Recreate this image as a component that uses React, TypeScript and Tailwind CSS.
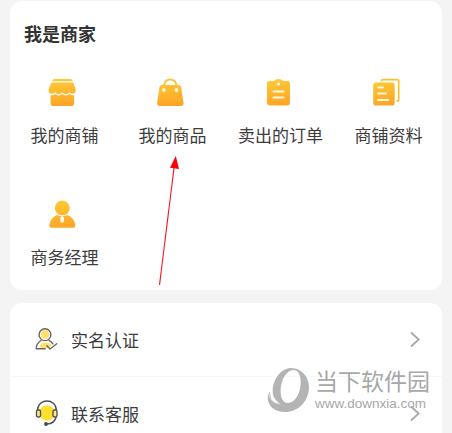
import type { ReactNode } from 'react';

function Icon({ children }: { children: ReactNode }) {
  return (
    <svg className="mr-1 h-8 w-8" viewBox="0 0 32 32" fill="url(#amber)">
      {children}
    </svg>
  );
}

function ShopIcon() {
  return (
    <Icon>
      <path d="M8.6 3H24q1.6 0 2.2 1.2l.5 1.1H5.9l.5-1.1Q7 3 8.6 3Z" />
      <path d="M5.4 6.5h21.800l2.300 6q1 5-2.800 5.300-2 0-3.200-1.600-1.500 2-3.400 2t-3.800-2q-1.700 2-3.600 2t-3.600-2q-1.500 1.700-3.500 1.600-3.800-.5-2.700-5.300Z" />
      <path d="M4.600 19.200q2.700.5 4.500-1.200 3.500 2.800 7.200 0 3.800 2.800 7.200 0 2 1.600 4.600 1.200v8q0 2.800-2.800 2.800h-18q-2.700 0-2.700-2.800Z" />
    </Icon>
  );
}

function BagIcon() {
  return (
    <Icon>
      <path d="M10.200 11V8.800a6 5.300 0 0 1 12 0V11" fill="none" stroke="#fec33a" strokeWidth="2" />
      <path d="M7.800 9h17q1.800 0 2.200 1.800l2.500 15.800q.5 3.400-2.600 3.400h-21q-3.300 0-2.700-3.400L5.600 10.800Q6 9 7.800 9Z" />
      <circle cx="9.900" cy="14" r="1.900" fill="#fff6d8" />
      <circle cx="22.500" cy="14" r="1.900" fill="#fff6d8" />
    </Icon>
  );
}

function OrderIcon() {
  return (
    <Icon>
      <path fillRule="evenodd" d="M7.500 5h4.300Q13.500 3 16.500 3t4.600 2h4.400q2.500 0 2.500 2.500v19q0 3-3 3H8q-3 0-3-3v-19Q5 5 7.500 5Zm9 1.400a1.600 1.600 0 1 0 .01 0Z" />
      <path d="M11.500 15.500h10M11.500 21.500h10" stroke="#fff8df" strokeWidth="2" strokeLinecap="round" />
    </Icon>
  );
}

function DocsIcon() {
  return (
    <Icon>
      <path d="M11.500 5.500V4.800q0-1.100 1.300-1.100H27q1.700 0 1.700 1.700v18.300q0 1.500-2.200 1.500" fill="none" stroke="#fdc02e" strokeWidth="1.700" />
      <path d="M5.500 6.500h16q3.200 0 3.200 3v17.200q0 2.800-2.800 2.800H6q-2.800 0-2.800-2.800V9q0-2.500 2.300-2.500Z" />
      <path d="M8 11.500h5M8 17.500h8M8 24h10" stroke="#fff8df" strokeWidth="1.900" strokeLinecap="round" />
    </Icon>
  );
}

function ManagerIcon() {
  return (
    <Icon>
      <circle cx="16.300" cy="9.900" r="7.400" />
      <path d="M11 17Q16.300 19.700 21.600 17q6 2.200 7.600 9.200.7 3.500-2.200 3.500H5.700q-2.900 0-2.200-3.500 1.600-7 7.500-9.200Z" />
      <rect x="14.400" y="18.200" width="3.500" height="6.500" rx="1.700" fill="#fffdf5" />
    </Icon>
  );
}

function Entry({ icon, label }: { icon: ReactNode; label: string }) {
  return (
    <div className="flex h-[122px] flex-col items-center whitespace-nowrap">
      {icon}
      <span className="mt-[14px] pl-px text-[17px] leading-[26px]">{label}</span>
    </div>
  );
}

function VerifiedIcon() {
  return (
    <svg className="h-8 w-8" viewBox="0 0 32 32" fill="none" stroke="#66676b" strokeWidth="1.400" strokeLinecap="round" strokeLinejoin="round">
      <circle cx="15" cy="10.500" r="4.400" fill="#ffe16b" stroke="none" />
      <path d="M9.500 23.500q.5-5 5.500-5t6.500 3l-3 3Z" fill="#ffe16b" stroke="none" />
      <circle cx="15" cy="10.700" r="5.900" />
      <path d="M11 16.500q-4.800 3-4.800 8.200h9M19 16.300q2.600 1.400 3.800 3.500M16.800 21.800l3.300 3.200 6.600-5.200" />
    </svg>
  );
}

function SupportIcon() {
  return (
    <svg className="h-8 w-8" viewBox="0 0 32 32" fill="none" stroke="#505155" strokeWidth="1.400" strokeLinejoin="round">
      <circle cx="17" cy="15" r="7.700" fill="#ffe02f" stroke="none" />
      <path d="M7.500 12C8 0 26 0 26.300 12M26.300 18.500q-1.500 7.200-9.500 7.500" />
      <rect x="6.500" y="12" width="4" height="7" rx="1.400" fill="#ffe98a" />
      <rect x="23" y="12" width="4" height="7" rx="1.400" fill="#ffe98a" />
      <circle cx="16" cy="26" r="1.900" fill="#46474b" stroke="none" />
    </svg>
  );
}

function MenuRow({ icon, label }: { icon: ReactNode; label: string }) {
  return (
    <div className="flex h-[74px] items-center border-b border-[#f8f8f8] pr-[21px] pl-[20px]">
      {icon}
      <span className="ml-[9px] flex-1 text-[17px] leading-[26px]">{label}</span>
      <svg className="h-5 w-3" viewBox="0 0 12 20" fill="none" stroke="#a6a6a6" strokeWidth="1.700">
        <path d="M2 2.500l7.700 7L2 16.500" />
      </svg>
    </div>
  );
}

function Watermark() {
  return (
    <div className="absolute top-[366px] left-[266px] flex text-[#a8a8a8]">
      <svg className="h-[48px] w-[44px]" viewBox="0 0 132 144" fill="#b4b4b4">
        <path fillRule="evenodd" d="M76 6C108 7 130 34 129 66 127 106 98 138 57 138 26 138 5 121 5 94q0-10 7-18 0 28 17 34h9Q19 98 20 72C22 36 48 6 76 6ZM82 12C61 12 45 42 44 72 43 97 52 111 66 111 88 111 103 81 104 52 105 28 97 12 82 12Z" />
        <path d="M8 81q4 31 34 32" fill="none" stroke="#fff" strokeWidth="2" />
      </svg>
      <div className="ml-[5px] whitespace-nowrap">
        <div className="text-[23px] leading-[28px]">当下软件园</div>
        <div className="pt-px font-['Liberation_Sans'] text-[13.5px] leading-[18px]">www.downxia.com</div>
      </div>
    </div>
  );
}

export default function App() {
  return (
    <main className="relative h-[433px] w-[452px] overflow-hidden bg-[#f4f4f4] px-[10px] pt-px font-['Noto_Sans_CJK_SC',sans-serif] text-[#3d3d3d]">
      <svg className="absolute h-0 w-0">
        <defs>
          <linearGradient id="amber" gradientUnits="userSpaceOnUse" x1="14" y1="3" x2="18" y2="30">
            <stop stopColor="#fdca35" />
            <stop offset="1" stopColor="#fda427" />
          </linearGradient>
        </defs>
      </svg>
      <section className="h-[289px] rounded-[12px] bg-white pt-[19px]">
        <h1 className="pl-[14px] text-[18px] leading-[27px] font-bold text-[#333]">我是商家</h1>
        <div className="mt-[29px] grid grid-cols-4">
          <Entry icon={<ShopIcon />} label="我的商铺" />
          <Entry icon={<BagIcon />} label="我的商品" />
          <Entry icon={<OrderIcon />} label="卖出的订单" />
          <Entry icon={<DocsIcon />} label="商铺资料" />
          <Entry icon={<ManagerIcon />} label="商务经理" />
        </div>
      </section>
      <section className="mt-[13px] h-[148px] rounded-t-[12px] bg-white">
        <MenuRow icon={<VerifiedIcon />} label="实名认证" />
        <MenuRow icon={<SupportIcon />} label="联系客服" />
      </section>
      <svg className="absolute top-[156px] left-[155px] h-[132px] w-[28px]" viewBox="0 0 28 132">
        <path d="M4.500 129L19 12" stroke="#fa1118" strokeWidth="1.100" />
        <path d="M20.800 0L24 13 15 11.800Z" fill="#fa0008" />
      </svg>
      <Watermark />
    </main>
  );
}
